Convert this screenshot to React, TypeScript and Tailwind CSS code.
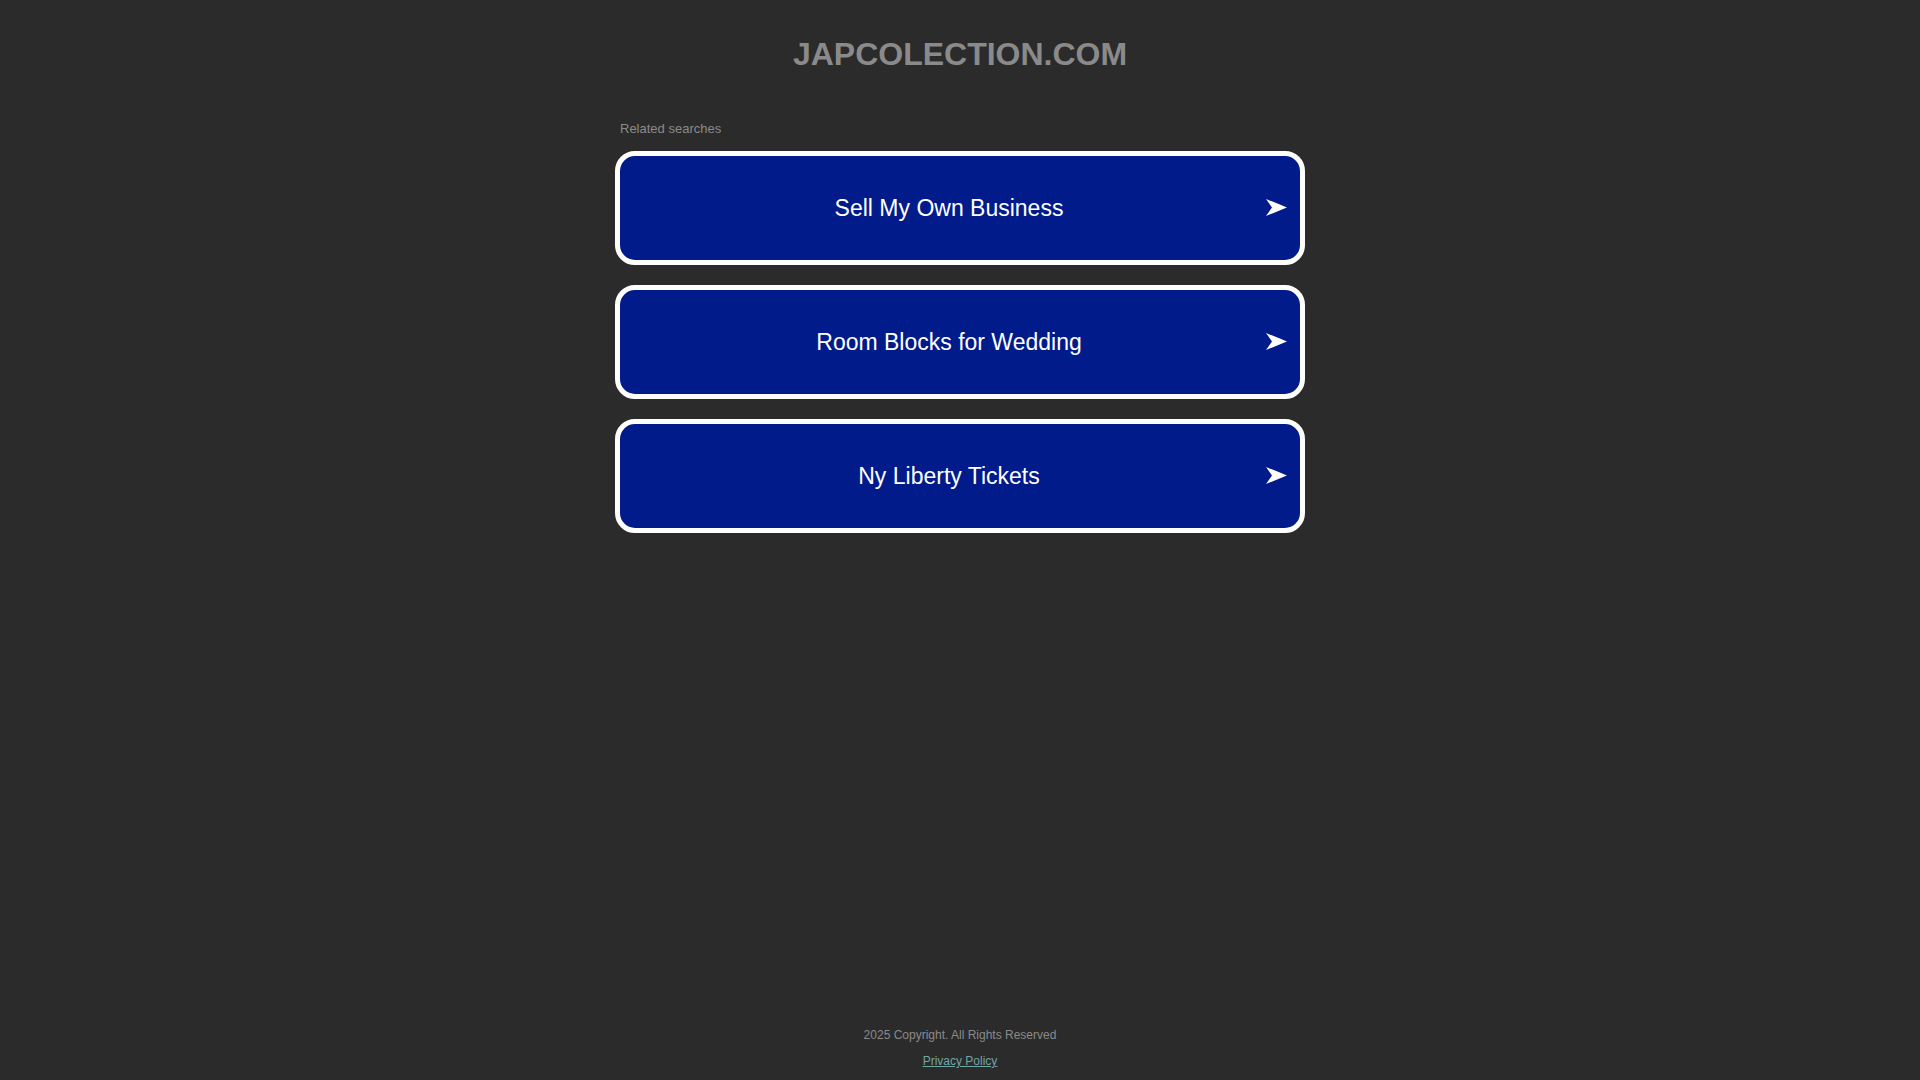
import React from "react";

const searches = ["Sell My Own Business", "Room Blocks for Wedding", "Ny Liberty Tickets"];

function Arrow() {
  return (
    <svg width="21" height="17" viewBox="0 0 21 17" className="absolute right-[13px] top-[43px]" fill="white">
      <path d="M0 0 Q10 4 21 8.5 Q10 13 0 17 L6 8.5 Z" />
    </svg>
  );
}

function SearchLink({ label }: { label: string }) {
  return (
    <a
      href="#"
      className="relative mb-[20px] flex h-[114px] items-center rounded-[20px] border-[5px] border-white bg-[#011b8b] text-white no-underline"
    >
      <span className="w-full pr-[22px] text-center text-[23px] leading-[26px]">{label}</span>
      <Arrow />
    </a>
  );
}

export default function App() {
  return (
    <div className="flex min-h-screen flex-col bg-[#2b2b2b] font-['Liberation_Sans',Arial,sans-serif]">
      <h1 className="pt-[36px] text-center text-[32px] font-bold leading-[36px] text-[#8a8a8a]">
        JAPCOLECTION.COM
      </h1>

      <div className="mx-auto mt-[49px] w-[690px]">
        <p className="mb-[14px] pl-[5px] text-[13px] leading-[16px] text-[#8a8a8a]">Related searches</p>
        {searches.map(s => (
          <SearchLink key={s} label={s} />
        ))}
      </div>

      <footer className="mt-auto pb-[11px] text-center text-[12px] leading-[16px]">
        <p className="text-[#8a8a8a]">2025 Copyright. All Rights Reserved</p>
        <a href="#" className="mt-[10px] inline-block text-[#6fa6a6] underline">
          Privacy Policy
        </a>
      </footer>
    </div>
  );
}
